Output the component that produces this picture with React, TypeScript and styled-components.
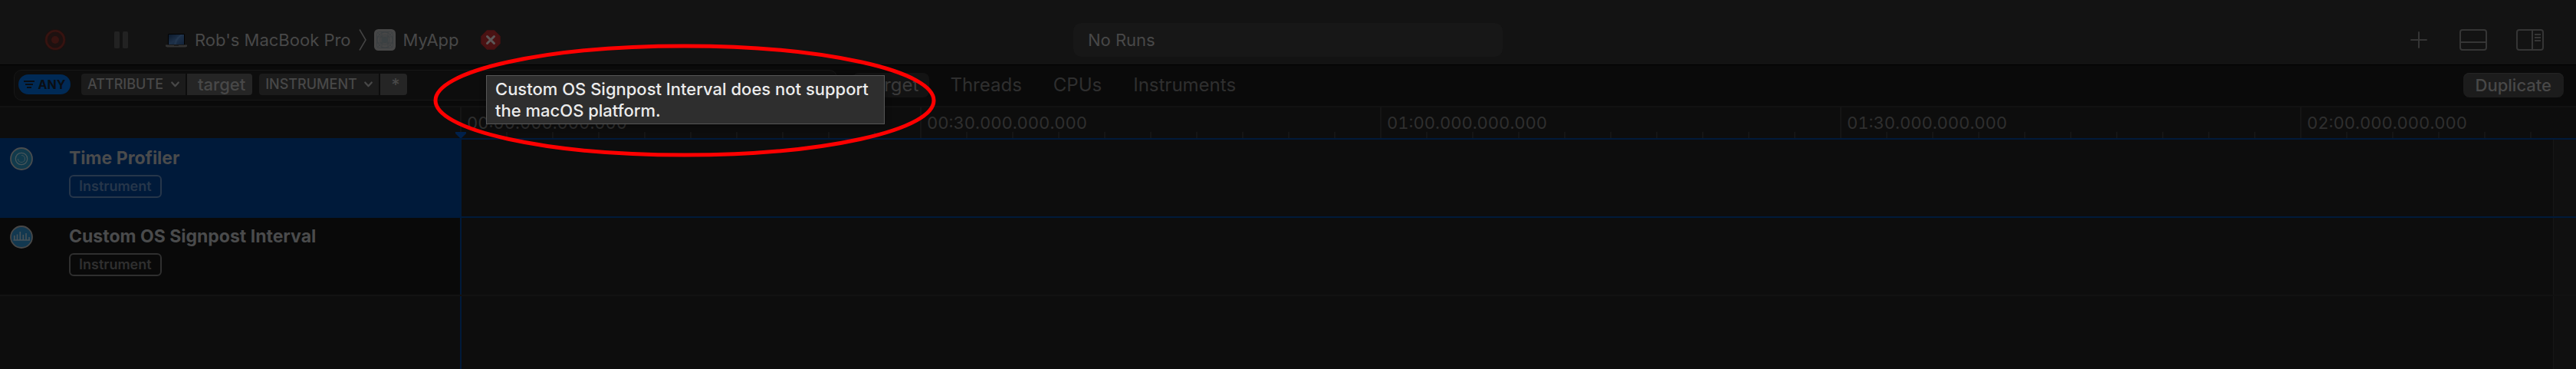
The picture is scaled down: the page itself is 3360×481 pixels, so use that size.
import React from "react";
import styled, { createGlobalStyle } from "styled-components";

const GlobalStyle = createGlobalStyle`
  *, *::before, *::after { box-sizing: border-box; }
  body { margin: 0; background: #0d0d0d; }
  button, input, select { font: inherit; color: inherit; margin: 0; }
`;

const ACCENT = "#001a3a";

const Page = styled.div`
  position: relative;
  display: flex;
  flex-direction: column;
  min-height: 100vh;
  overflow: hidden;
  background: #0d0d0d;
  color: #484848;
  font-family: Inter, "Liberation Sans", sans-serif;
  font-size: 22px;
  line-height: 28px;
`;

/* ---------- toolbar ---------- */

const Toolbar = styled.header`
  display: grid;
  grid-template-columns: 1fr minmax(0, 560px) 1fr;
  align-items: center;
  padding: 30px 42px 10px;
  background: #131313;
  border-bottom: 1px solid #000;
`;

const ToolbarSide = styled.div<{ $end?: boolean }>`
  display: flex;
  align-items: center;
  gap: ${(p) => (p.$end ? 38 : 0)}px;
  justify-content: ${(p) => (p.$end ? "flex-end" : "flex-start")};
  padding-left: ${(p) => (p.$end ? 0 : 15)}px;
`;

const IconButton = styled.button<{ $after?: number }>`
  display: flex;
  padding: 0;
  border: 0;
  background: none;
  color: #353535;
  margin-right: ${(p) => p.$after ?? 0}px;
`;

const Crumb = styled.button`
  display: flex;
  align-items: center;
  gap: 10px;
  padding: 0;
  border: 0;
  background: none;
  white-space: nowrap;
`;

const Crumbs = styled.nav`
  display: flex;
  align-items: center;
  gap: 10px;
  margin-right: 28px;
`;

const RunStatus = styled.div`
  height: 44px;
  padding: 8px 19px;
  border-radius: 10px;
  background: #171717;
`;

/* ---------- filter bar ---------- */

const FilterBar = styled.div`
  display: flex;
  align-items: center;
  height: 55px;
  padding: 0 16px 1px 18px;
  background: #0a0a0a;
  border-bottom: 2px solid #121212;
`;

const FilterBox = styled.div`
  display: flex;
  align-items: center;
  flex: 0 1 1074px;
  height: 40px;
  padding: 0 5px 2px;
  border: 1px solid #171717;
  border-radius: 10px;
  background: #0d0d0d;
`;

const MatchPill = styled.button`
  display: flex;
  align-items: center;
  justify-content: center;
  gap: 5px;
  width: 68px;
  height: 26px;
  margin-right: 14px;
  padding: 0;
  border: 0;
  border-radius: 13px;
  background: #002a56;
  color: #0a0d12;
  font-size: 16px;
  font-weight: 700;
`;

const Token = styled.div`
  display: flex;
  gap: 2px;
  margin-right: 9px;
`;

const TokenKey = styled.label`
  display: flex;
  align-items: center;
  height: 28px;
  padding: 0 8px;
  gap: 9px;
  border-radius: 4px 0 0 4px;
  background: #1b1b1b;
`;

const TokenSelect = styled.select`
  appearance: none;
  padding: 0;
  border: 0;
  background: none;
  font-size: 18px;
  font-weight: 500;
`;

const TokenValue = styled.button`
  height: 28px;
  padding: 0 9px 0 14px;
  border: 0;
  border-radius: 0 4px 4px 0;
  background: #252525;
  font-weight: 500;
  line-height: 26px;
`;

const FilterInput = styled.input`
  flex: 1;
  min-width: 0;
  border: 0;
  outline: 0;
  background: none;
`;

const Tabs = styled.div`
  display: flex;
  gap: 13px;
  margin-left: 20px;
  margin-right: auto;
`;

const Tab = styled.button<{ $active?: boolean }>`
  height: 32px;
  padding: 0 14px;
  border: 0;
  border-radius: 8px;
  background: ${(p) => (p.$active ? "#131313" : "none")};
  color: ${(p) => (p.$active ? "#3a3a3a" : "#2f2f2f")};
  font-size: 24px;
  line-height: 32px;
`;

const PushButton = styled.button`
  height: 32px;
  padding: 0 16px;
  border: 0;
  border-radius: 8px;
  background: #1c1c1c;
  box-shadow: inset 0 1px #242424;
  font-weight: 500;
  line-height: 32px;
`;

/* ---------- timeline ---------- */

const Row = styled.div`
  display: grid;
  grid-template-columns: 600px minmax(0, 1fr);
`;

const RulerRow = styled(Row)`
  height: 40px;
`;

const Ruler = styled.div`
  position: relative;
  display: flex;
  min-width: 0;
`;

const RulerClip = styled.div`
  display: flex;
  flex: 1;
  min-width: 0;
  overflow: hidden;
`;

const RulerCell = styled.div`
  flex: 0 0 600px;
  padding: 6px 0 6px 7px;
  border-left: 2px solid #151515;
  background: repeating-linear-gradient(to right, #151515 0 2px, transparent 2px 60px) border-box
    0 32px / 100% 8px no-repeat;
  background-origin: border-box;
  color: #2f2f2f;
  font-variant-numeric: tabular-nums;
`;

const Playhead = styled.svg`
  position: absolute;
  left: -7px;
  bottom: 0;
`;

const TrackRow = styled(Row)<{ $selected?: boolean }>`
  border-top: ${(p) => (p.$selected ? `2px solid ${ACCENT}` : "0")};
  border-bottom: 2px solid ${(p) => (p.$selected ? ACCENT : "#121212")};
`;

const TrackHeader = styled.div<{ $selected?: boolean }>`
  display: grid;
  grid-template-columns: 30px 1fr;
  column-gap: 47px;
  align-content: start;
  height: 100px;
  padding: 10px 13px;
  background: ${(p) => (p.$selected ? ACCENT : "#090909")};
`;

const TrackIcon = styled.svg`
  display: block;
`;

const TrackTitle = styled.h2`
  margin: 0;
  color: #4a4b4c;
  font-size: 23px;
  font-weight: 700;
  line-height: 28px;
`;

const KindBadge = styled.span<{ $selected?: boolean }>`
  grid-column: 2;
  justify-self: start;
  height: 30px;
  margin-top: 6px;
  padding: 0 11px;
  border: 2px solid ${(p) => (p.$selected ? "#26364a" : "#2f2f2f")};
  border-radius: 6px;
  color: ${(p) => (p.$selected ? "#26364a" : "#2f2f2f")};
  font-size: 18px;
  font-weight: 600;
  line-height: 26px;
`;

const Lane = styled.div`
  display: flex;
  justify-content: flex-end;
  border-left: 2px solid ${ACCENT};
`;

const Gutter = styled.div`
  width: 30px;
  border-left: 1px solid #171717;
  background: #101010;
`;

const EmptyRow = styled(Row)`
  flex: 1;
`;

/* ---------- overlays ---------- */

const Tooltip = styled.div`
  position: absolute;
  top: 98px;
  left: 634px;
  width: 520px;
  padding: 3px 11px;
  border: 1px solid #565656;
  background: #2e2e2e;
  box-shadow: 0 2px 8px rgba(0, 0, 0, 0.3);
  color: #ececec;
  font-weight: 500;
`;

const Highlight = styled.svg`
  position: absolute;
  top: 56px;
  left: 563px;
  pointer-events: none;
`;

/* ---------- icons ---------- */

const RecordIcon = () => (
  <svg width="30" height="30" viewBox="0 0 30 30">
    <circle cx="15" cy="15" r="14" fill="#1d1110" />
    <circle cx="15" cy="15" r="11.7" fill="none" stroke="#371310" strokeWidth="2.6" />
    <circle cx="15" cy="15" r="5" fill="#371310" />
  </svg>
);

const PauseIcon = () => (
  <svg width="18" height="22" viewBox="0 0 18 22" fill="#222">
    <rect width="7" height="22" rx="1.5" />
    <rect x="11" width="7" height="22" rx="1.5" />
  </svg>
);

const LaptopIcon = () => (
  <svg width="28" height="30" viewBox="0 0 28 30">
    <defs>
      <linearGradient id="screen" x1="0" y1="0" x2="1" y2="1">
        <stop offset="0" stopColor="#0c1a2c" />
        <stop offset="0.5" stopColor="#1d3048" />
        <stop offset="1" stopColor="#12233a" />
      </linearGradient>
    </defs>
    <rect x="3" y="7" width="22" height="15" rx="1.5" fill="#020202" />
    <rect x="4" y="8" width="20" height="13" fill="url(#screen)" />
    <path d="M11 21C12 15 15 11 20 8H23C18 11 15 15 14 21Z" fill="#2a3e55" opacity="0.5" />
    <path d="M0 21.5H28V23.500L26 24.500H2L0 23.500Z" fill="#333" />
    <rect x="11" y="21.5" width="6" height="1.200" fill="#161616" />
  </svg>
);

const CrumbArrow = () => (
  <svg width="10" height="28" viewBox="0 0 10 28" fill="none" stroke="#434343" strokeWidth="1.6">
    <path d="M1 0.500L9 14L1 27.500" />
  </svg>
);

const AppIcon = () => (
  <svg width="28" height="28" viewBox="0 0 28 28">
    <rect width="28" height="28" rx="5.500" fill="#474747" />
    <g fill="none" stroke="#3a3f41" strokeWidth="0.8">
      <rect x="3.500" y="3.500" width="21" height="21" rx="3" />
      <circle cx="14" cy="14" r="10" />
      <circle cx="14" cy="14" r="6.500" />
      <path d="M10 3.500V24.500M18 3.500V24.500M3.500 10H24.500M3.500 18H24.500M4 4L24 24M24 4L4 24" />
    </g>
    <circle cx="14" cy="14" r="4" fill="#3b4143" />
  </svg>
);

const StopIcon = () => (
  <svg width="26" height="26" viewBox="0 0 26 26">
    <path
      d="M8.500 1H17.500L25 8.500V17.500L17.500 25H8.500L1 17.500V8.500Z"
      fill="#4a1213"
      stroke="#4a1213"
      strokeWidth="1.5"
      strokeLinejoin="round"
    />
    <path d="M8.500 8.500L17.500 17.500M17.500 8.500L8.500 17.500" stroke="#5c5757" strokeWidth="3" strokeLinecap="round" />
  </svg>
);

const PlusIcon = () => (
  <svg width="30" height="28" viewBox="0 0 30 28" stroke="currentColor" strokeWidth="2" strokeLinecap="round">
    <path d="M15 4V24M5 14H25" />
  </svg>
);

const BottomPanelIcon = () => (
  <svg width="36" height="28" viewBox="0 0 36 28" fill="none" stroke="currentColor" strokeWidth="2">
    <rect x="1" y="1" width="34" height="26" rx="3" />
    <path d="M1 17H35" />
  </svg>
);

const SidePanelIcon = () => (
  <svg width="36" height="28" viewBox="0 0 36 28" fill="none" stroke="currentColor" strokeWidth="2">
    <rect x="1" y="1" width="34" height="26" rx="3" />
    <path d="M21 1V27M24 7H32M24 11H32M24 15H32" />
  </svg>
);

const MatchIcon = () => (
  <svg width="14" height="10" viewBox="0 0 14 10" fill="currentColor">
    <rect width="14" height="2" />
    <rect x="2" y="4" width="10" height="2" />
    <rect x="4" y="8" width="6" height="2" />
  </svg>
);

const ChevronIcon = () => (
  <svg width="11" height="8" viewBox="0 0 11 8" fill="none" stroke="#484848" strokeWidth="2.2" strokeLinecap="round" strokeLinejoin="round">
    <path d="M1.200 1.500L5.500 6.300L9.800 1.500" />
  </svg>
);

const ProfilerIcon = () => (
  <TrackIcon width="30" height="30" viewBox="0 0 30 30" fill="none">
    <circle cx="15" cy="15" r="14" fill="#113a4c" stroke="#4a4d4e" strokeWidth="1.8" />
    <circle cx="15" cy="15" r="7.7" stroke="#46555a" strokeWidth="1.3" />
    <path d="M15 10.500A4.500 4.500 0 1 1 10.500 15" stroke="#3b5058" strokeWidth="1.2" />
  </TrackIcon>
);

const SignpostIcon = () => (
  <TrackIcon width="30" height="30" viewBox="0 0 30 30" fill="none">
    <circle cx="15" cy="15" r="14" fill="#123850" stroke="#484848" strokeWidth="1.8" />
    <path
      d="M4.500 19H26M5.800 19V13M9.500 19V11.500M13.300 19V8M17.300 19V12M21 19V10M25 19V15"
      stroke="#475258"
      strokeWidth="1.6"
    />
  </TrackIcon>
);

/* ---------- data ---------- */

const times = [
  "00:00.000.000.000",
  "00:30.000.000.000",
  "01:00.000.000.000",
  "01:30.000.000.000",
  "02:00.000.000.000",
];

const tokens = [
  { key: "ATTRIBUTE", value: "target" },
  { key: "INSTRUMENT", value: "*" },
];

const tabs = ["Target", "Threads", "CPUs", "Instruments"];

const tracks = [
  { title: "Time Profiler", Icon: ProfilerIcon, selected: true },
  { title: "Custom OS Signpost Interval", Icon: SignpostIcon, selected: false },
];

export default function App() {
  return (
    <Page>
      <GlobalStyle />
      <Toolbar>
        <ToolbarSide>
          <IconButton aria-label="Record" $after={62}>
            <RecordIcon />
          </IconButton>
          <IconButton aria-label="Pause" $after={49}>
            <PauseIcon />
          </IconButton>
          <Crumbs aria-label="Recording target">
            <Crumb>
              <LaptopIcon />
              Rob's MacBook Pro
            </Crumb>
            <CrumbArrow />
            <Crumb>
              <AppIcon />
              MyApp
            </Crumb>
          </Crumbs>
          <IconButton aria-label="Show error">
            <StopIcon />
          </IconButton>
        </ToolbarSide>
        <RunStatus>No Runs</RunStatus>
        <ToolbarSide $end>
          <IconButton aria-label="Add instrument">
            <PlusIcon />
          </IconButton>
          <IconButton aria-label="Toggle detail area">
            <BottomPanelIcon />
          </IconButton>
          <IconButton aria-label="Toggle inspector">
            <SidePanelIcon />
          </IconButton>
        </ToolbarSide>
      </Toolbar>

      <FilterBar>
        <FilterBox>
          <MatchPill>
            <MatchIcon />
            ANY
          </MatchPill>
          {tokens.map((t) => (
            <Token key={t.key}>
              <TokenKey>
                <TokenSelect aria-label={t.key}>
                  <option>{t.key}</option>
                </TokenSelect>
                <ChevronIcon />
              </TokenKey>
              <TokenValue>{t.value}</TokenValue>
            </Token>
          ))}
          <FilterInput aria-label="Track filter" />
        </FilterBox>
        <Tabs role="tablist">
          {tabs.map((t, i) => (
            <Tab key={t} role="tab" aria-selected={i === 0} $active={i === 0}>
              {t}
            </Tab>
          ))}
        </Tabs>
        <PushButton>Duplicate</PushButton>
      </FilterBar>

      <RulerRow>
        <div />
        <Ruler>
          <RulerClip>
            {times.map((t) => (
              <RulerCell key={t}>{t}</RulerCell>
            ))}
          </RulerClip>
          <Playhead width="16" height="8" viewBox="0 0 16 8" fill="#00204a">
            <path d="M1 0H15V2L9 8H7L1 2Z" />
          </Playhead>
        </Ruler>
      </RulerRow>

      {tracks.map(({ title, Icon, selected }) => (
        <TrackRow key={title} $selected={selected}>
          <TrackHeader $selected={selected}>
            <Icon />
            <TrackTitle>{title}</TrackTitle>
            <KindBadge $selected={selected}>Instrument</KindBadge>
          </TrackHeader>
          <Lane>
            <Gutter />
          </Lane>
        </TrackRow>
      ))}
      <EmptyRow>
        <div />
        <Lane>
          <Gutter />
        </Lane>
      </EmptyRow>

      <Tooltip role="tooltip">Custom OS Signpost Interval does not support the macOS platform.</Tooltip>
      <Highlight width="660" height="150" viewBox="0 0 660 150" fill="none" aria-hidden="true">
        <ellipse cx="330" cy="75" rx="325" ry="71" stroke="#ff0000" strokeWidth="5" />
      </Highlight>
    </Page>
  );
}
